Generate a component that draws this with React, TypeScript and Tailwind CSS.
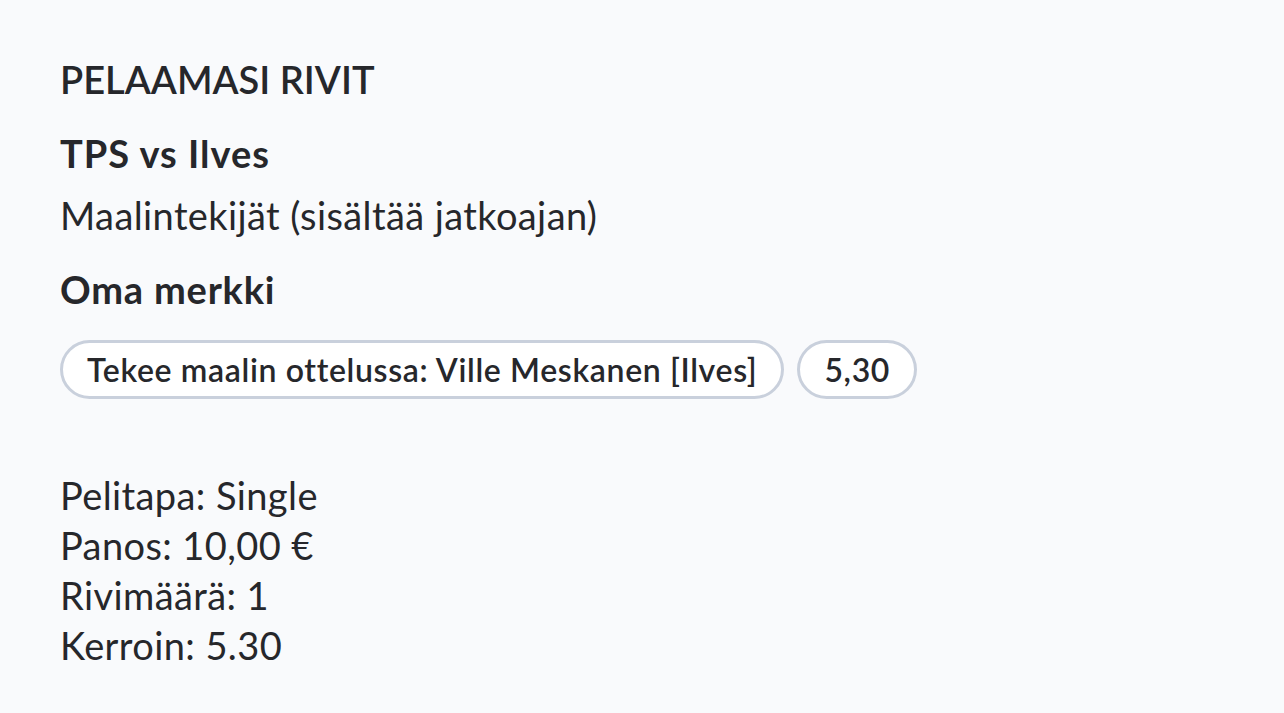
const details = [
  "Pelitapa: Single",
  "Panos: 10,00 €",
  "Rivimäärä: 1",
  "Kerroin: 5.30",
];

export default function App() {
  return (
    <div
      className="min-h-[713px] w-full bg-[#f9fafc] text-[#26272b]"
      style={{ fontFamily: "Lato, 'Open Sans', sans-serif" }}
    >
      <div className="px-[60px] pt-[57px]">
        <h2 className="text-[38px] font-semibold leading-[44px]">PELAAMASI RIVIT</h2>
        <h3 className="mt-[30px] text-[38px] font-bold leading-[44px] tracking-[1px]">
          TPS vs Ilves
        </h3>
        <p className="mt-[18px] text-[38px] leading-[44px] tracking-[0.4px]">
          Maalintekijät (sisältää jatkoajan)
        </p>
        <h3 className="mt-[30px] text-[38px] font-bold leading-[44px] tracking-[0.8px]">
          Oma merkki
        </h3>
        <div className="mt-[29px] flex gap-[13px]">
          <span className="flex h-[59px] items-center rounded-full border-[3px] border-[#c9d0dc] bg-white px-[24px] text-[32px] font-semibold tracking-[0.65px]">
            Tekee maalin ottelussa: Ville Meskanen [Ilves]
          </span>
          <span className="flex h-[59px] items-center rounded-full border-[3px] border-[#c9d0dc] bg-white px-[24px] text-[32px] font-semibold tracking-[0.65px]">
            5,30
          </span>
        </div>
        <div className="mt-[71px] text-[38px] leading-[50px] tracking-[0.4px]">
          {details.map((line) => (
            <p key={line}>{line}</p>
          ))}
        </div>
      </div>
    </div>
  );
}
